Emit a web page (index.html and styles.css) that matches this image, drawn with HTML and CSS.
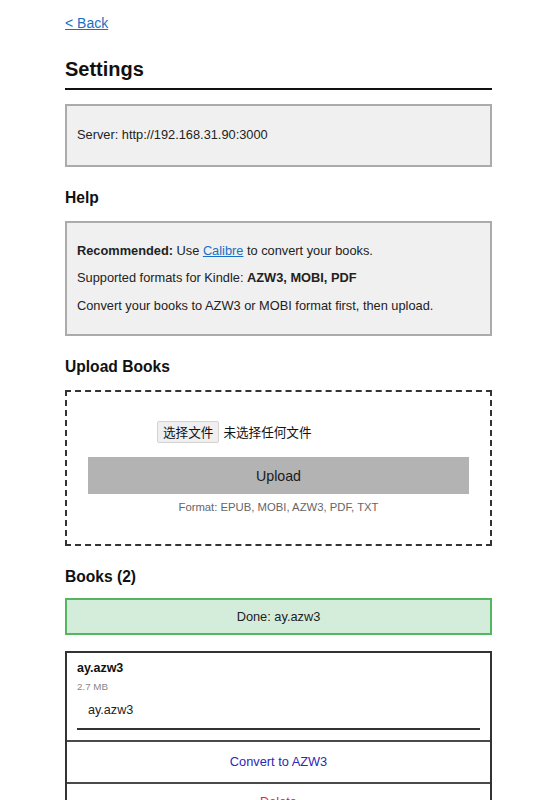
FILE: index.html
```html
<!DOCTYPE html>
<html lang="zh-CN">
<head>
<meta charset="utf-8">
<title>Settings</title>
<link rel="stylesheet" href="styles.css">
</head>
<body>
<div class="page">
  <a class="back" href="#">&lt; Back</a>
  <h1 class="title">Settings</h1>

  <div class="box server-box">
    <p>Server: http://192.168.31.90:3000</p>
  </div>

  <h2 class="section-title">Help</h2>
  <div class="box help-box">
    <p><strong>Recommended:</strong> Use <a href="#">Calibre</a> to convert your books.</p>
    <p>Supported formats for Kindle: <strong>AZW3, MOBI, PDF</strong></p>
    <p>Convert your books to AZW3 or MOBI format first, then upload.</p>
  </div>

  <h2 class="section-title">Upload Books</h2>
  <div class="upload-box">
    <div class="file-row">
      <div class="file-picker">
        <span class="file-btn">选择文件</span>
        <span class="file-name">未选择任何文件</span>
      </div>
    </div>
    <button class="upload-btn" type="button">Upload</button>
    <p class="formats">Format: EPUB, MOBI, AZW3, PDF, TXT</p>
  </div>

  <h2 class="section-title">Books (2)</h2>
  <div class="status">Done: ay.azw3</div>

  <div class="book-card">
    <div class="book-body">
      <div class="book-name">ay.azw3</div>
      <div class="book-size">2.7 MB</div>
      <input class="book-input" type="text" value="ay.azw3">
    </div>
    <div class="book-action convert">Convert to AZW3</div>
    <div class="book-action delete">Delete</div>
  </div>
</div>
</body>
</html>
```

FILE: styles.css
```css
html, body {
  margin: 0;
  padding: 0;
  background: #ffffff;
}

body {
  font-family: "Liberation Sans", Arial, "Noto Sans CJK SC", sans-serif;
  font-size: 12.8px;
  color: #222222;
}

.page {
  padding: 15px 61px 40px 65px;
}

a {
  color: #1a6fc4;
  text-decoration: underline;
}

.back {
  display: block;
  font-size: 14px;
  line-height: 16px;
  width: max-content;
}

.title {
  margin: 27px 0 14px;
  padding-bottom: 7px;
  border-bottom: 2px solid #111111;
  font-size: 20px;
  line-height: 23px;
  font-weight: bold;
  color: #111111;
}

.box {
  background: #f0f0f0;
  border: 2px solid #ababab;
}

.box p {
  margin: 12.7px 0;
  line-height: 14.8px;
}

.server-box {
  padding: 9.4px 10px;
}

.help-box {
  padding: 8px 10px;
}

.section-title {
  margin: 22px 0 14px;
  font-size: 15.6px;
  line-height: 18px;
  font-weight: bold;
  color: #111111;
}

.upload-box {
  border: 2px dashed #333333;
  padding: 20px 21px 21px;
}

.file-row {
  margin: 9px 0 14px;
  text-align: center;
}

.file-picker {
  display: inline-flex;
  align-items: center;
  width: 243px;
  font-family: "Noto Sans CJK SC", "Liberation Sans", sans-serif;
  font-size: 12.6px;
  line-height: 16px;
  color: #111111;
  text-align: left;
}

.file-btn {
  background: #efefef;
  border: 1px solid #d2d2d2;
  border-radius: 2px;
  padding: 2px 5px;
  margin-right: 4px;
}

.upload-btn {
  display: block;
  width: 100%;
  height: 37px;
  border: none;
  background: #b3b3b3;
  color: #1a1a1a;
  font-family: "Liberation Sans", Arial, sans-serif;
  font-size: 14.2px;
  padding: 0;
}

.formats {
  margin: 7px 0 9px;
  text-align: center;
  font-size: 11.3px;
  line-height: 13px;
  color: #666666;
}

.status {
  margin-top: -2px;
  margin-bottom: 16px;
  background: #d4edda;
  border: 2px solid #52b760;
  padding: 9px;
  line-height: 15px;
  text-align: center;
  color: #222222;
}

.book-card {
  border: 2px solid #333333;
}

.book-body {
  padding: 8px 10px 10px;
}

.book-name {
  font-weight: bold;
  font-size: 12.5px;
  line-height: 15px;
  color: #111111;
}

.book-size {
  margin-top: 5px;
  font-size: 9.8px;
  line-height: 12px;
  color: #888888;
}

.book-input {
  display: block;
  box-sizing: border-box;
  width: 100%;
  margin: 6px 0 0;
  padding: 4px 11px 10px;
  border: none;
  border-bottom: 2px solid #333333;
  background: transparent;
  font-family: "Liberation Sans", Arial, sans-serif;
  font-size: 12.6px;
  line-height: 15px;
  color: #222222;
  outline: none;
}

.book-action {
  border-top: 2px solid #4a4a4a;
  padding: 12px 10px 13px;
  line-height: 15px;
  text-align: center;
}

.convert {
  color: #2a2ab4;
}

.delete {
  padding-top: 10px;
  color: #d8283c;
}
```
